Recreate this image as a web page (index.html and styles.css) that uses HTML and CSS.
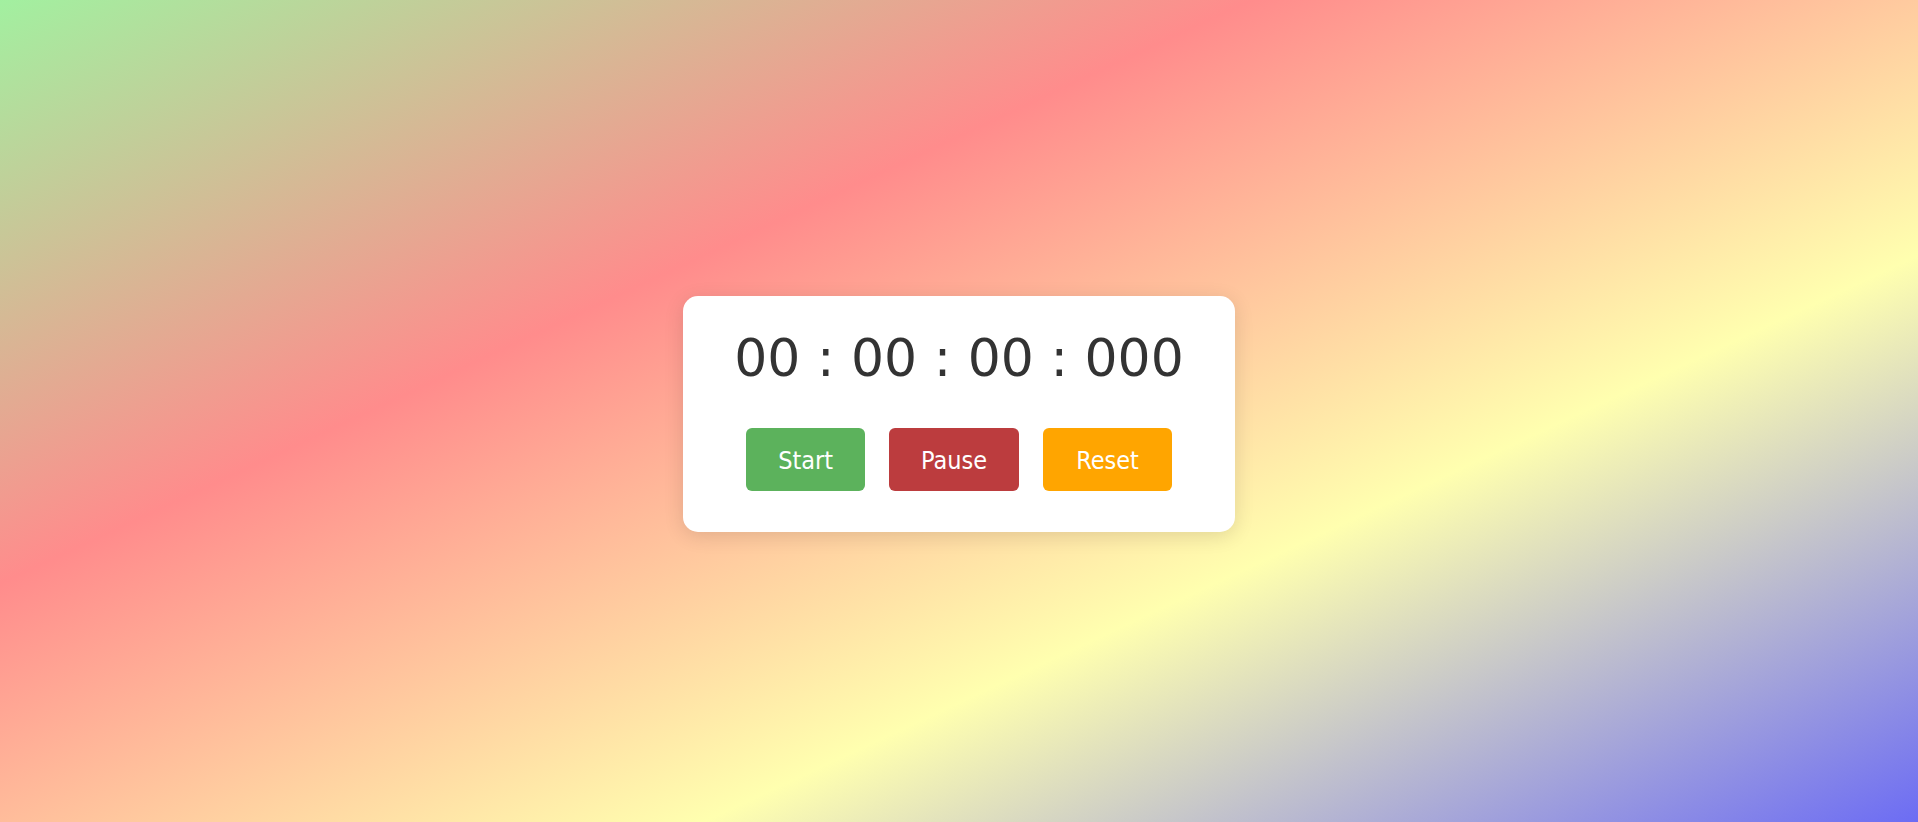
FILE: index.html
```html
<!DOCTYPE html>
<html lang="en">
<head>
<meta charset="utf-8">
<title>Stopwatch</title>
<link rel="stylesheet" href="styles.css">
</head>
<body>
<div class="card">
  <div class="timer">00 : 00 : 00 : 000</div>
  <div class="controls">
    <button class="btn btn-start">Start</button>
    <button class="btn btn-pause">Pause</button>
    <button class="btn btn-reset">Reset</button>
  </div>
</div>
</body>
</html>
```
FILE: styles.css
```css
html, body {
  margin: 0;
  padding: 0;
  height: 100%;
}
body {
  min-height: 100vh;
  display: flex;
  align-items: center;
  justify-content: center;
  font-family: "DejaVu Sans", sans-serif;
  background: linear-gradient(155deg, #a2f0a0 0%, #ff8c8c 34%, #ffffaf 67%, #6c6cf4 100%);
  box-sizing: border-box;
  padding-top: 5px;
}
.card {
  width: 552px;
  box-sizing: border-box;
  background: #ffffff;
  border-radius: 15px;
  padding: 32px 20px 41px;
  box-shadow: 0 4px 20px rgba(0, 0, 0, 0.12);
  display: flex;
  flex-direction: column;
  align-items: center;
}
.timer {
  font-family: "DejaVu Sans", sans-serif;
  font-size: 52px;
  color: #333333;
  margin-bottom: 40px;
  white-space: pre;
}
.controls {
  display: flex;
  gap: 24px;
  justify-content: center;
}
.btn {
  font-family: "DejaVu Sans Condensed", "DejaVu Sans", sans-serif;
  font-stretch: condensed;
  font-size: 25px;
  color: #ffffff;
  border: none;
  border-radius: 6px;
  padding: 2px 32px 0;
  height: 63px;
  cursor: pointer;
}
.btn-start { background: #5cb25c; }
.btn-pause { background: #bc3c3e; }
.btn-reset { background: #ffa500; padding: 2px 33px 0; }
```
